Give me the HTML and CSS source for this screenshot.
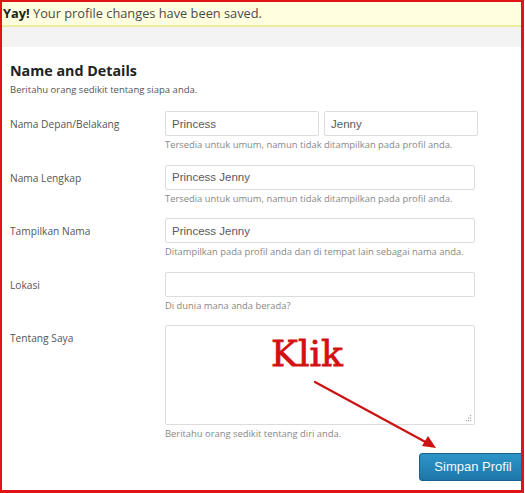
FILE: index.html
```html
<!DOCTYPE html>
<html>
<head>
<meta charset="utf-8">
<link rel="stylesheet" href="styles.css">
</head>
<body>
<div class="frame">
  <div class="notice"><b>Yay!</b> Your profile changes have been saved.</div>
  <div class="band"></div>
  <div class="content">
    <h2 class="title">Name and Details</h2>
    <p class="intro">Beritahu orang sedikit tentang siapa anda.</p>

    <div class="row">
      <label class="label">Nama Depan/Belakang</label>
      <div class="field">
        <div class="pair">
          <input class="input half" type="text" value="Princess">
          <input class="input half" type="text" value="Jenny">
        </div>
        <p class="help">Tersedia untuk umum, namun tidak ditampilkan pada profil anda.</p>
      </div>
    </div>

    <div class="row">
      <label class="label">Nama Lengkap</label>
      <div class="field">
        <input class="input" type="text" value="Princess Jenny">
        <p class="help">Tersedia untuk umum, namun tidak ditampilkan pada profil anda.</p>
      </div>
    </div>

    <div class="row">
      <label class="label">Tampilkan Nama</label>
      <div class="field">
        <input class="input" type="text" value="Princess Jenny">
        <p class="help">Ditampilkan pada profil anda dan di tempat lain sebagai nama anda.</p>
      </div>
    </div>

    <div class="row">
      <label class="label">Lokasi</label>
      <div class="field">
        <input class="input" type="text" value="">
        <p class="help">Di dunia mana anda berada?</p>
      </div>
    </div>

    <div class="row">
      <label class="label">Tentang Saya</label>
      <div class="field">
        <div class="area-wrap">
          <textarea class="input area"></textarea>
          <svg class="grip" width="7" height="7" viewBox="0 0 7 7">
            <rect x="5" y="0" width="1.2" height="1.2" fill="#aaa"/>
            <rect x="3" y="2.5" width="1.2" height="1.2" fill="#aaa"/>
            <rect x="5" y="2.5" width="1.2" height="1.2" fill="#aaa"/>
            <rect x="1" y="5" width="1.2" height="1.2" fill="#aaa"/>
            <rect x="3" y="5" width="1.2" height="1.2" fill="#aaa"/>
            <rect x="5" y="5" width="1.2" height="1.2" fill="#aaa"/>
          </svg>
        </div>
        <p class="help">Beritahu orang sedikit tentang diri anda.</p>
      </div>
    </div>

    <div class="actions">
      <button class="btn" type="button">Simpan Profil</button>
    </div>
  </div>

  <div class="klik">Klik</div>
  <svg class="arrow" width="140" height="80" viewBox="0 0 140 80">
    <line x1="2" y1="2" x2="118" y2="65" stroke="#cc1111" stroke-width="2.2" stroke-linecap="round"/>
    <path d="M123 68 L109 66 L115 56 Z" fill="#cc1111"/>
  </svg>
</div>
</body>
</html>
```

FILE: styles.css
```css
html, body {
  margin: 0;
  padding: 0;
  background: #fff;
}

.frame {
  position: relative;
  width: 524px;
  height: 493px;
  box-sizing: border-box;
  border-style: solid;
  border-color: #e01414;
  border-width: 2px 3px 3px 2px;
  overflow: hidden;
  background: #fff;
  font-family: "Open Sans", "DejaVu Sans", sans-serif;
}

.notice {
  height: 23px;
  line-height: 22px;
  padding-left: 1px;
  background: #ffffe0;
  border-bottom: 2px solid #f1eba0;
  font-size: 12.8px;
  color: #4a4a4a;
  white-space: nowrap;
}

.notice b {
  color: #222;
}

.band {
  height: 20px;
  background: #f3f3f3;
}

.content {
  padding: 14px 0 0 8px;
}

.title {
  margin: 0;
  font-size: 14.3px;
  line-height: 20px;
  font-weight: 700;
  color: #222;
}

.intro {
  margin: 2px 0 14px;
  font-size: 9.5px;
  line-height: 14px;
  color: #555;
}

.row {
  display: flex;
  margin-bottom: 12.5px;
}

.label {
  width: 155px;
  flex: none;
  padding-top: 6px;
  font-size: 10.2px;
  line-height: 14px;
  color: #555;
}

.field {
  width: 310px;
}

.pair {
  display: flex;
  gap: 5px;
  width: 313px;
}

.input {
  display: block;
  box-sizing: border-box;
  width: 310px;
  height: 25px;
  margin: 0;
  padding: 0 6px;
  border: 1px solid #dcdcdc;
  border-radius: 2px;
  background: #fff;
  font-family: "Liberation Sans", Arial, sans-serif;
  font-size: 11.5px;
  color: #5a5a5a;
  outline: none;
}

.half {
  width: 154px;
}

.area-wrap {
  position: relative;
  width: 310px;
}

.area {
  height: 100px;
  resize: none;
}

.grip {
  position: absolute;
  right: 3px;
  bottom: 3px;
}

.help {
  margin: 2px 0 0;
  font-size: 9.4px;
  line-height: 14px;
  color: #888;
  white-space: nowrap;
}

.actions {
  display: flex;
  justify-content: flex-end;
  margin-top: -1px;
  margin-right: -6px;
}

.btn {
  width: 108px;
  height: 28px;
  border: 1px solid #16628c;
  border-radius: 3px;
  background: linear-gradient(#2e94c8, #1d77a8);
  color: #f4f9fc;
  font-family: "Liberation Sans", Arial, sans-serif;
  font-size: 13px;
  padding: 0;
}

.klik {
  position: absolute;
  left: 269px;
  top: 332px;
  font-family: "DejaVu Serif", "Liberation Serif", serif;
  font-size: 36px;
  line-height: 40px;
  color: #d40f0f;
  -webkit-text-stroke: 0.8px #d40f0f;
}

.arrow {
  position: absolute;
  left: 311px;
  top: 378px;
}
```
